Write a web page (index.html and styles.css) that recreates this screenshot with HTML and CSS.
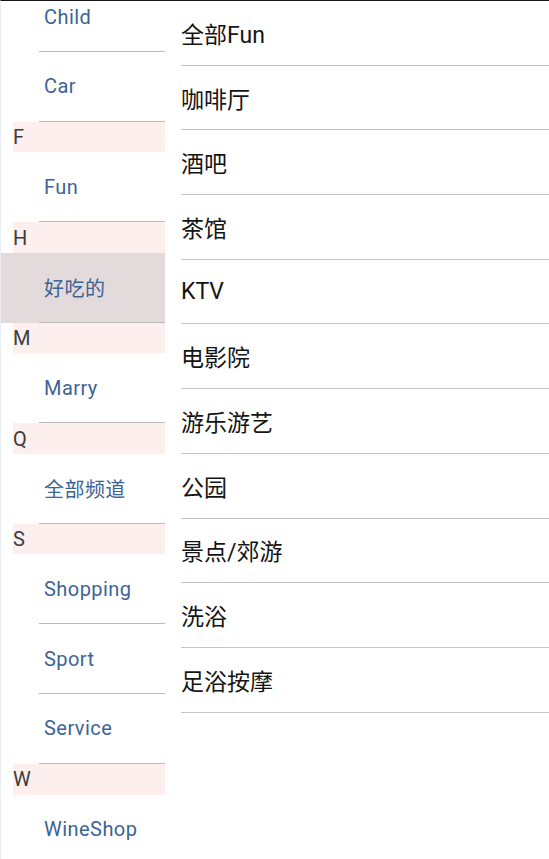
FILE: index.html
```html
<!DOCTYPE html>
<html lang="zh">
<head>
<meta charset="utf-8">
<title>Categories</title>
<link rel="stylesheet" href="styles.css">
</head>
<body>
<div class="screen">
  <div class="side">
    <div class="side-list">
      <div class="item"><div class="item-in">Child</div></div>
      <div class="item"><div class="item-in">Car</div></div>
      <div class="head">F</div>
      <div class="item"><div class="item-in">Fun</div></div>
      <div class="head">H</div>
      <div class="item selected"><div class="item-in">好吃的</div></div>
      <div class="head">M</div>
      <div class="item"><div class="item-in">Marry</div></div>
      <div class="head">Q</div>
      <div class="item"><div class="item-in">全部频道</div></div>
      <div class="head">S</div>
      <div class="item"><div class="item-in">Shopping</div></div>
      <div class="item"><div class="item-in">Sport</div></div>
      <div class="item"><div class="item-in">Service</div></div>
      <div class="head">W</div>
      <div class="item"><div class="item-in">WineShop</div></div>
    </div>
  </div>
  <div class="main">
    <div class="row">全部Fun</div>
    <div class="row">咖啡厅</div>
    <div class="row">酒吧</div>
    <div class="row">茶馆</div>
    <div class="row">KTV</div>
    <div class="row">电影院</div>
    <div class="row">游乐游艺</div>
    <div class="row">公园</div>
    <div class="row">景点/郊游</div>
    <div class="row">洗浴</div>
    <div class="row">足浴按摩</div>
  </div>
</div>
</body>
</html>
```

FILE: styles.css
```css
html, body {
  margin: 0;
  padding: 0;
  background: #ffffff;
}
body {
  font-family: Roboto, "Noto Sans CJK SC", sans-serif;
  overflow: hidden;
}
.screen {
  width: 549px;
  height: 859px;
  box-sizing: border-box;
  border-top: 1px solid #141414;
  border-left: 1px solid #e9edf3;
  display: flex;
  overflow: hidden;
}
.side {
  width: 164px;
  flex: none;
  overflow: hidden;
}
.side-list {
  margin-top: -18.8px;
}
.head {
  height: 30.7px;
  margin-left: 12px;
  background: #fcefee;
  color: #3c3c3c;
  font-size: 20px;
  line-height: 31px;
  display: flex;
  align-items: center;
  padding-top: 1px;
  box-sizing: border-box;
}
.item {
  height: 69.8px;
  box-sizing: border-box;
  display: flex;
}
.item.selected {
  background: #e3dadc;
}
.item-in {
  flex: 1;
  margin-left: 38px;
  padding-left: 5px;
  border-bottom: 1px solid #bdb9b9;
  display: flex;
  align-items: center;
  color: #3c6494;
  font-size: 20px;
  letter-spacing: 0.45px;
}
.main {
  flex: 1;
  padding-left: 16px;
}
.row {
  height: 64.7px;
  box-sizing: border-box;
  border-bottom: 1px solid #c4c4c4;
  display: flex;
  align-items: center;
  color: #141414;
  font-size: 23px;
}
```
